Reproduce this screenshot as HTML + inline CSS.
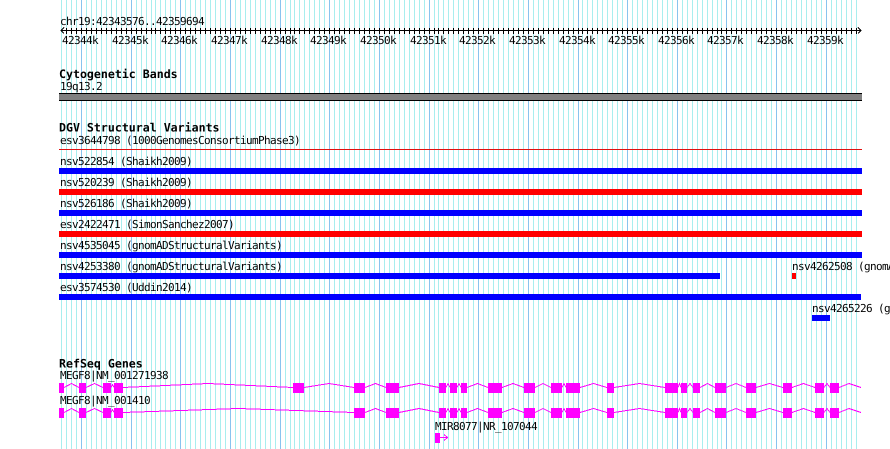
<!DOCTYPE html>
<html><head><meta charset="utf-8"><style>
html,body{margin:0;padding:0;background:#fff;width:890px;height:449px;overflow:hidden}
svg{display:block}
text{font-family:"DejaVu Sans Mono","Liberation Mono",monospace;font-size:11px;letter-spacing:-0.622px;fill:#000;text-rendering:geometricPrecision}
text.b{font-weight:bold;font-size:11.6px;letter-spacing:0}
</style></head><body>
<svg width="890" height="449" viewBox="0 0 890 449" xmlns="http://www.w3.org/2000/svg">
<g fill="none" stroke="#a8eeee" stroke-width="449" stroke-dasharray="1 4" shape-rendering="crispEdges">
<path d="M61 224.5H152"/><path d="M155 224.5H291"/><path d="M294 224.5H435"/><path d="M438 224.5H579"/><path d="M582 224.5H718"/><path d="M721 224.5H857"/>
</g>
<path shape-rendering="crispEdges" fill="none" stroke="#88c4ee" d="M81.5 0V449M131.5 0V449M180.5 0V449M230.5 0V449M280.5 0V449M329.5 0V449M379.5 0V449M429.5 0V449M478.5 0V449M528.5 0V449M578.5 0V449M627.5 0V449M677.5 0V449M726.5 0V449M776.5 0V449M826.5 0V449"/>

<text x="60" y="25">chr19:42343576..42359694</text>
<g fill="none" stroke="#000" shape-rendering="crispEdges">
<path d="M61 30.5H861"/>
<g stroke-width="6" stroke-dasharray="1 4"><path d="M66 31H152"/><path d="M155 31H291"/><path d="M294 31H435"/><path d="M438 31H579"/><path d="M582 31H718"/><path d="M721 31H857"/></g>
<path d="M64 27.5L61 30.5L64 33.5M858 27.5L861 30.5L858 33.5"/>
</g>
<text x="62" y="44">42344k</text><text x="112" y="44">42345k</text><text x="161" y="44">42346k</text><text x="211" y="44">42347k</text><text x="261" y="44">42348k</text><text x="310" y="44">42349k</text><text x="360" y="44">42350k</text><text x="410" y="44">42351k</text><text x="459" y="44">42352k</text><text x="509" y="44">42353k</text><text x="559" y="44">42354k</text><text x="608" y="44">42355k</text><text x="658" y="44">42356k</text><text x="707" y="44">42357k</text><text x="757" y="44">42358k</text><text x="807" y="44">42359k</text>

<text class="b" x="59" y="78">Cytogenetic Bands</text>
<text x="60" y="90">19q13.2</text>
<rect x="59" y="93" width="803" height="8" fill="#000"/><rect x="59" y="94" width="803" height="6" fill="#808080"/>

<text class="b" x="59" y="131.5">DGV Structural Variants</text>
<text x="60" y="144">esv3644798 (1000GenomesConsortiumPhase3)</text>
<rect x="59" y="149" width="803" height="1" fill="#e01010"/>
<text x="60" y="165">nsv522854 (Shaikh2009)</text>
<rect x="59" y="168" width="803" height="6" fill="#0000ff"/>
<text x="60" y="186">nsv520239 (Shaikh2009)</text>
<rect x="59" y="189" width="803" height="6" fill="#ff0000"/>
<text x="60" y="207">nsv526186 (Shaikh2009)</text>
<rect x="59" y="210" width="803" height="6" fill="#0000ff"/>
<text x="60" y="228">esv2422471 (SimonSanchez2007)</text>
<rect x="59" y="231" width="803" height="6" fill="#ff0000"/>
<text x="60" y="249">nsv4535045 (gnomADStructuralVariants)</text>
<rect x="59" y="252" width="803" height="6" fill="#0000ff"/>
<text x="60" y="270">nsv4253380 (gnomADStructuralVariants)</text>
<rect x="59" y="273" width="661" height="6" fill="#0000ff"/>
<text x="792" y="270">nsv4262508 (gnomADStructuralVariants)</text>
<rect x="792" y="273" width="4" height="6" fill="#ff0000"/>
<text x="60" y="291">esv3574530 (Uddin2014)</text>
<rect x="59" y="294" width="802" height="6" fill="#0000ff"/>
<text x="812" y="312">nsv4265226 (gnomADStructuralVariants)</text>
<rect x="812" y="315" width="18" height="6" fill="#0000ff"/>

<text class="b" x="59" y="367.5">RefSeq Genes</text>
<text x="60" y="379">MEGF8|NM_001271938</text>
<text x="60" y="404">MEGF8|NM_001410</text>
<text x="435" y="430">MIR8077|NR_107044</text>

<g fill="none" stroke="#ff00ff" shape-rendering="crispEdges">
<path d="M64 387.5L71.5 383.5L79 387.5M86 387.5L94.5 383.5L103 387.5M111 387.5L112.5 384.5L114 387.5M123 387.5L208 383.5L293 387.5M304 387.5L329 383.5L354 387.5M365 387.5L375.5 383.5L386 387.5M399 387.5L419 383.5L439 387.5M446 387.5L448 383.5L450 387.5M457 387.5L459 383.5L461 387.5M467 387.5L477.5 383.5L488 387.5M502 387.5L513 383.5L524 387.5M535 387.5L543 383.5L551 387.5M562 387.5L564 383.5L566 387.5M580 387.5L593.5 383.5L607 387.5M614 387.5L639.5 383.5L665 387.5M678 387.5L679.5 383.5L681 387.5M687 387.5L690 383.5L693 387.5M700 387.5L707.5 383.5L715 387.5M726 387.5L736 383.5L746 387.5M756 387.5L769.5 383.5L783 387.5M792 387.5L803.5 383.5L815 387.5M824 387.5L827 383.5L830 387.5M839 387.5L849 383.5L861 387.5"/>
<path d="M64 412.5L71.5 408.5L79 412.5M86 412.5L94.5 408.5L103 412.5M111 412.5L112.5 409.5L114 412.5M123 412.5L238.5 408.5L354 412.5M365 412.5L375.5 408.5L386 412.5M399 412.5L419 408.5L439 412.5M446 412.5L448 408.5L450 412.5M457 412.5L459 408.5L461 412.5M467 412.5L477.5 408.5L488 412.5M502 412.5L513 408.5L524 412.5M535 412.5L543 408.5L551 412.5M562 412.5L564 408.5L566 412.5M580 412.5L593.5 408.5L607 412.5M614 412.5L639.5 408.5L665 412.5M678 412.5L679.5 408.5L681 412.5M687 412.5L690 408.5L693 412.5M700 412.5L707.5 408.5L715 412.5M726 412.5L736 408.5L746 412.5M756 412.5L769.5 408.5L783 412.5M792 412.5L803.5 408.5L815 412.5M824 412.5L827 408.5L830 412.5M839 412.5L849 408.5L861 412.5"/>
<path d="M440 437.5H447M444 434.5L447.5 437.5L444 440.5"/>
</g>
<g fill="#ff00ff">
<rect x="59" y="383" width="5" height="10"/><rect x="79" y="383" width="7" height="10"/><rect x="103" y="383" width="8" height="10"/><rect x="114" y="383" width="9" height="10"/><rect x="293" y="383" width="11" height="10"/><rect x="354" y="383" width="11" height="10"/><rect x="386" y="383" width="13" height="10"/><rect x="439" y="383" width="7" height="10"/><rect x="450" y="383" width="7" height="10"/><rect x="461" y="383" width="6" height="10"/><rect x="488" y="383" width="14" height="10"/><rect x="524" y="383" width="11" height="10"/><rect x="551" y="383" width="11" height="10"/><rect x="566" y="383" width="14" height="10"/><rect x="607" y="383" width="7" height="10"/><rect x="665" y="383" width="13" height="10"/><rect x="681" y="383" width="6" height="10"/><rect x="693" y="383" width="7" height="10"/><rect x="715" y="383" width="11" height="10"/><rect x="746" y="383" width="10" height="10"/><rect x="783" y="383" width="9" height="10"/><rect x="815" y="383" width="9" height="10"/><rect x="830" y="383" width="9" height="10"/>
<rect x="59" y="408" width="5" height="10"/><rect x="79" y="408" width="7" height="10"/><rect x="103" y="408" width="8" height="10"/><rect x="114" y="408" width="9" height="10"/><rect x="354" y="408" width="11" height="10"/><rect x="386" y="408" width="13" height="10"/><rect x="439" y="408" width="7" height="10"/><rect x="450" y="408" width="7" height="10"/><rect x="461" y="408" width="6" height="10"/><rect x="488" y="408" width="14" height="10"/><rect x="524" y="408" width="11" height="10"/><rect x="551" y="408" width="11" height="10"/><rect x="566" y="408" width="14" height="10"/><rect x="607" y="408" width="7" height="10"/><rect x="665" y="408" width="13" height="10"/><rect x="681" y="408" width="6" height="10"/><rect x="693" y="408" width="7" height="10"/><rect x="715" y="408" width="11" height="10"/><rect x="746" y="408" width="10" height="10"/><rect x="783" y="408" width="9" height="10"/><rect x="815" y="408" width="9" height="10"/><rect x="830" y="408" width="9" height="10"/>
<rect x="435" y="433" width="5" height="10"/>
</g>
</svg>
</body></html>
